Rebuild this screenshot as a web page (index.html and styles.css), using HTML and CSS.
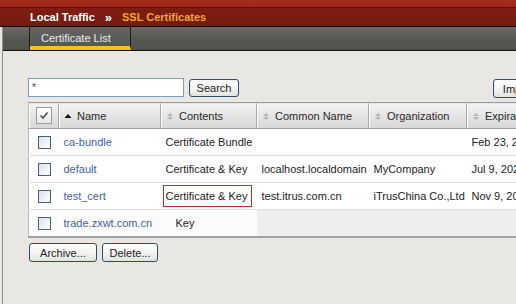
FILE: index.html
```html
<!DOCTYPE html>
<html>
<head>
<meta charset="utf-8">
<link rel="stylesheet" href="styles.css">
</head>
<body>
<div class="topbar"></div>
<div class="crumb"><span class="c1">Local Traffic</span><span class="sep">»</span><span class="c2">SSL Certificates</span></div>
<div class="main">
  <div class="tabs"><div class="tab-gap"></div><div class="tab">Certificate List</div><div class="tab-rest"></div></div>
  <div class="content">
    <div class="toolbar">
      <input class="search-input" type="text" value="*">
      <button class="btn search-btn">Search</button>
      <div class="spacer"></div>
      <button class="btn import-btn">Import...</button>
    </div>
    <table class="grid">
      <colgroup><col class="w-chk"><col class="w-name"><col class="w-cont"><col class="w-cn"><col class="w-org"><col class="w-exp"></colgroup>
      <thead>
        <tr>
          <th class="chk-th"><span class="hchk"><svg width="10" height="9" viewBox="0 0 10 9"><path d="M1.5 4.5 L4 7 L8.5 1.5" fill="none" stroke="#555" stroke-width="1.6"/></svg></span></th>
          <th><svg class="sort" width="8" height="9" viewBox="0 0 8 9"><path d="M0.5 6 L4 2 L7.5 6 Z" fill="#111"/></svg>Name</th>
          <th><svg class="sort" width="8" height="9" viewBox="0 0 8 9"><path d="M1 4 L4 1 L7 4 Z M1 5 L4 8 L7 5 Z" fill="#b4b4b4"/></svg>Contents</th>
          <th><svg class="sort" width="8" height="9" viewBox="0 0 8 9"><path d="M1 4 L4 1 L7 4 Z M1 5 L4 8 L7 5 Z" fill="#b4b4b4"/></svg>Common Name</th>
          <th><svg class="sort" width="8" height="9" viewBox="0 0 8 9"><path d="M1 4 L4 1 L7 4 Z M1 5 L4 8 L7 5 Z" fill="#b4b4b4"/></svg>Organization</th>
          <th><svg class="sort" width="8" height="9" viewBox="0 0 8 9"><path d="M1 4 L4 1 L7 4 Z M1 5 L4 8 L7 5 Z" fill="#b4b4b4"/></svg>Expiration</th>
        </tr>
      </thead>
      <tbody>
        <tr>
          <td class="chk-td"><span class="cb"></span></td>
          <td><a class="lnk">ca-bundle</a></td>
          <td>Certificate Bundle</td>
          <td></td>
          <td></td>
          <td>Feb 23, 2021</td>
        </tr>
        <tr>
          <td class="chk-td"><span class="cb"></span></td>
          <td><a class="lnk">default</a></td>
          <td>Certificate &amp; Key</td>
          <td>localhost.localdomain</td>
          <td>MyCompany</td>
          <td>Jul 9, 2028</td>
        </tr>
        <tr>
          <td class="chk-td"><span class="cb"></span></td>
          <td><a class="lnk">test_cert</a></td>
          <td class="boxed"><span class="redbox">Certificate &amp; Key</span></td>
          <td>test.itrus.com.cn</td>
          <td class="org-tight">iTrusChina Co.,Ltd</td>
          <td>Nov 9, 2020</td>
        </tr>
        <tr class="row-last">
          <td class="chk-td"><span class="cb"></span></td>
          <td><a class="lnk">trade.zxwt.com.cn</a></td>
          <td class="key-cell">Key</td>
          <td></td>
          <td></td>
          <td></td>
        </tr>
      </tbody>
    </table>
    <div class="actions">
      <button class="btn archive-btn">Archive...</button>
      <button class="btn delete-btn">Delete...</button>
    </div>
  </div>
</div>
</body>
</html>
```

FILE: styles.css
```css
html, body {
  margin: 0;
  padding: 0;
  width: 516px;
  height: 304px;
  overflow: hidden;
  background: #e9e7e3;
  font-family: "Liberation Sans", Arial, sans-serif;
  font-size: 11px;
  color: #222;
}

.topbar {
  height: 7px;
  background: linear-gradient(#a92c1c, #9c2617);
  border-bottom: 1px solid #5e140c;
}

.crumb {
  height: 18px;
  background: linear-gradient(#7e1d12, #761a10);
  border-bottom: 1px solid #1a0604;
  display: flex;
  align-items: center;
  padding-left: 30px;
  font-weight: bold;
  font-size: 11px;
}
.crumb .c1 { color: #ffffff; }
.crumb .sep { color: #ffffff; font-size: 13px; margin: 0 10px 0 10px; line-height: 1; }
.crumb .c2 { color: #f2a623; }

.main {
  margin-left: 2px;
  border-left: 1px solid #8e8e8e;
  height: 277px;
  overflow: hidden;
}

.tabs {
  display: flex;
  height: 23px;
  background: linear-gradient(#6a6a66, #55554f 60%, #52524c);
  border-bottom: 1px solid #111;
}
.tab-gap {
  width: 26px;
  border-right: 1px solid #1c1c1c;
}
.tab {
  width: 101px;
  border-right: 1px solid #1c1c1c;
  color: #ececec;
  box-sizing: border-box;
  padding-left: 11px;
  padding-top: 5px;
  border-bottom: 4px solid #f0c419;
  background: linear-gradient(#636360, #575753);
}
.tab-rest { flex: 1; }

.content {
  padding: 27px 0 0 25px;
  overflow: hidden;
}

.toolbar {
  display: flex;
  align-items: flex-start;
  height: 24px;
}
.search-input {
  box-sizing: border-box;
  width: 156px;
  height: 19px;
  margin: 0;
  padding: 0 3px;
  border: 1px solid #7f9db9;
  background: #fff;
  font-family: "Liberation Sans", Arial, sans-serif;
  font-size: 10px;
  color: #444;
}
.btn {
  box-sizing: border-box;
  height: 19px;
  margin: 0;
  padding: 0 6px;
  border: 1px solid #2f4c68;
  border-radius: 3px;
  background: linear-gradient(#ffffff, #f4f4f2 50%, #e2e2de);
  font-family: "Liberation Sans", Arial, sans-serif;
  font-size: 11px;
  color: #222;
  line-height: 16px;
}
.search-btn { margin-left: 5px; width: 50px; height: 18px; margin-top: 1px; }
.spacer { flex: 1; }
.import-btn { width: 60px; margin-top: 1px; flex-shrink: 0; margin-right: -37px; }

.grid {
  border-collapse: collapse;
  table-layout: fixed;
  width: 520px;
  background: #fff;
  border-top: 1px solid #9a9a9a;
  border-left: 1px solid #b8b8b8;
  border-bottom: 2px solid #a2a2a2;
  margin-top: 0;
}
.w-chk { width: 30px; }
.w-name { width: 102px; }
.w-cont { width: 96px; }
.w-cn { width: 112px; }
.w-org { width: 98px; }
.w-exp { width: 82px; }

.grid th {
  height: 25px;
  padding: 0 0 0 5px;
  text-align: left;
  font-weight: normal;
  color: #2a2a2a;
  white-space: nowrap;
  overflow: hidden;
  background: linear-gradient(#f3f3f1, #e6e6e4 45%, #d8d8d6);
  border-right: 1px solid #a8a8a8;
  border-bottom: 1px solid #a0a0a0;
  box-shadow: inset 1px 0 0 #fbfbfb;
}
.grid th .sort { vertical-align: -1px; margin-right: 5px; }
.grid th.chk-th { padding: 0; text-align: center; }
.hchk {
  display: inline-flex;
  align-items: center;
  justify-content: center;
  width: 14px;
  height: 15px;
  border: 1px solid #9a9a9a;
  background: linear-gradient(#ffffff, #e8e8e8);
  vertical-align: middle;
}

.grid td {
  height: 26px;
  padding: 0 0 0 5px;
  white-space: nowrap;
  overflow: visible;
  border-bottom: 1px solid #dedede;
  color: #222;
}
.grid td.chk-td { padding: 0 0 0 9px; }
.cb {
  display: block;
  width: 11px;
  height: 11px;
  border: 1px solid #45627f;
  background: linear-gradient(135deg, #d9dfe8, #f6f7f9 70%, #ffffff);
}
.lnk { color: #3c5fae; text-decoration: none; }
.grid td.boxed { padding: 0 0 0 2px; }
.redbox {
  display: block;
  box-sizing: border-box;
  width: 89px;
  height: 22px;
  line-height: 20px;
  border: 1px solid #c8262a;
  padding-left: 2px;
}
.grid td.org-tight { padding-left: 5px; }
.grid td.key-cell { padding-left: 15px; }
.row-last td { background: #fcfcfc; border-bottom: none; }
.row-last td:nth-child(n+4) { background: #efeeec; }

.actions {
  display: flex;
  gap: 5px;
  margin-top: 5px;
  padding-left: 1px;
}
.archive-btn { width: 68px; }
.delete-btn { width: 56px; }
```
